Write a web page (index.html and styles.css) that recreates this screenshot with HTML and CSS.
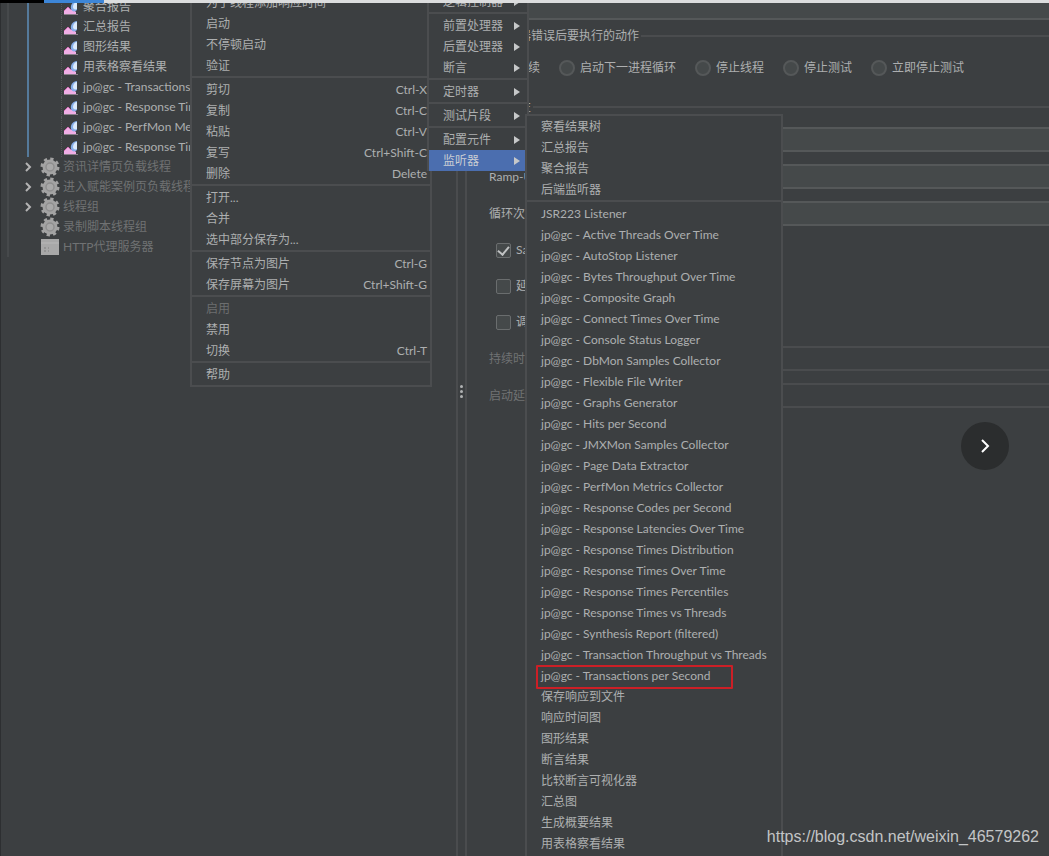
FILE: index.html
```
<!DOCTYPE html>
<html lang="zh-CN">
<head>
  <meta charset="UTF-8">
  <meta name="viewport" content="width=device-width, initial-scale=1.0">
  <title>JMeter</title>
  <link rel="stylesheet" href="styles.css">
</head>
<body>
<svg class="defs" aria-hidden="true">
  <symbol id="chart" viewBox="0 0 14 14">
    <path d="M0 13V10L4 6L7 9L9 8L12 11V13Z" fill="#f0aee6"/>
    <path d="M0 10L4 6L7 9" fill="none" stroke="#cf6fb4"/>
    <path d="M7 8C6 4 9 0 13 0V9C11 11 8 11 7 8Z" fill="#86aeea"/>
    <path d="M9 6C9 3 11 1 13 1V8C11 9 9 8 9 6Z" fill="#dcebfb"/>
    <path d="M0 13.500H14" stroke="#8c7f8c"/>
  </symbol>
  <symbol id="gear" viewBox="0 0 20 20">
    <circle cx="10" cy="10" r="7.5" fill="#a3a3a3"/>
    <circle cx="10" cy="10" r="8" fill="none" stroke="#a3a3a3" stroke-width="3" stroke-dasharray="3.2 3.08"/>
    <circle cx="10" cy="10" r="4" fill="#a9a9a9" stroke="#8f8f8f" stroke-width="1.5"/>
  </symbol>
  <symbol id="server" viewBox="0 0 20 18">
    <path d="M1 1H19V17H1Z" fill="#a8a8a8"/>
    <path d="M1 5H19" stroke="#b8b8b8"/>
    <path d="M4 10H6M8 10H9M4 13H6M8 13H9" stroke="#8c8c8c" stroke-width="1.5"/>
  </symbol>
  <symbol id="chevron" viewBox="0 0 8 10">
    <path d="M2 1L6 5L2 9" fill="none" stroke="#b4b4b4" stroke-width="2"/>
  </symbol>
</svg>

<div class="topbar"><span class="played"></span><span class="active"></span><span class="rest"></span></div>

<div class="app">
  <nav class="tree">
    <ul class="results">
      <li><svg><use href="#chart"/></svg>聚合报告</li>
      <li><svg><use href="#chart"/></svg>汇总报告</li>
      <li><svg><use href="#chart"/></svg>图形结果</li>
      <li><svg><use href="#chart"/></svg>用表格察看结果</li>
      <li><svg><use href="#chart"/></svg>jp@gc - Transactions per Second</li>
      <li><svg><use href="#chart"/></svg>jp@gc - Response Times Over Time</li>
      <li><svg><use href="#chart"/></svg>jp@gc - PerfMon Metrics Collector</li>
      <li><svg><use href="#chart"/></svg>jp@gc - Response Times Over Time</li>
    </ul>
    <ul class="groups">
      <li><button class="toggle" aria-label="展开"><svg><use href="#chevron"/></svg></button><svg class="icon"><use href="#gear"/></svg>资讯详情页负载线程</li>
      <li><button class="toggle" aria-label="展开"><svg><use href="#chevron"/></svg></button><svg class="icon"><use href="#gear"/></svg>进入赋能案例页负载线程</li>
      <li><button class="toggle" aria-label="展开"><svg><use href="#chevron"/></svg></button><svg class="icon"><use href="#gear"/></svg>线程组</li>
      <li><span class="toggle"></span><svg class="icon"><use href="#gear"/></svg>录制脚本线程组</li>
      <li><span class="toggle"></span><svg class="icon"><use href="#server"/></svg>HTTP代理服务器</li>
    </ul>
  </nav>

  <div class="splitter"><i></i><i></i><i></i></div>

  <main class="panel">
    <input class="comment" type="text" aria-label="注释">
    <fieldset class="actions">
      <legend>在取样器错误后要执行的动作</legend>
      <label><input type="radio" name="action">继续</label>
      <label><input type="radio" name="action">启动下一进程循环</label>
      <label><input type="radio" name="action">停止线程</label>
      <label><input type="radio" name="action">停止测试</label>
      <label><input type="radio" name="action">立即停止测试</label>
    </fieldset>
    <fieldset class="props">
      <legend>线程属性</legend>
      <div class="field"><label for="threads">线程数：</label><input id="threads" type="text"></div>
      <div class="field"><label for="ramp">Ramp-Up：</label><input id="ramp" type="text"></div>
      <div class="field"><label for="loops">循环次数</label><input id="loops" type="text"></div>
      <label class="check"><input type="checkbox" checked>Same user</label>
      <label class="check"><input type="checkbox">延迟创建</label>
      <label class="check"><input type="checkbox">调度器</label>
      <div class="field"><label for="duration">持续时间</label><input id="duration" type="text" disabled></div>
      <div class="field"><label for="delay">启动延迟</label><input id="delay" type="text" disabled></div>
    </fieldset>
  </main>
</div>

<div class="menu menu-edit">
  <button>为了线程添加响应时间</button>
  <button>启动</button>
  <button>不停顿启动</button>
  <button>验证</button>
  <hr>
  <button>剪切<kbd>Ctrl-X</kbd></button>
  <button>复制<kbd>Ctrl-C</kbd></button>
  <button>粘贴<kbd>Ctrl-V</kbd></button>
  <button>复写<kbd>Ctrl+Shift-C</kbd></button>
  <button>删除<kbd>Delete</kbd></button>
  <hr>
  <button>打开...</button>
  <button>合并</button>
  <button>选中部分保存为...</button>
  <hr>
  <button>保存节点为图片<kbd>Ctrl-G</kbd></button>
  <button>保存屏幕为图片<kbd>Ctrl+Shift-G</kbd></button>
  <hr>
  <button disabled>启用</button>
  <button>禁用</button>
  <button>切换<kbd>Ctrl-T</kbd></button>
  <hr>
  <button>帮助</button>
</div>

<div class="menu menu-add">
  <button class="sub">逻辑控制器</button>
  <hr>
  <button class="sub">前置处理器</button>
  <button class="sub">后置处理器</button>
  <button class="sub">断言</button>
  <hr>
  <button class="sub">定时器</button>
  <hr>
  <button class="sub">测试片段</button>
  <hr>
  <button class="sub">配置元件</button>
  <button class="sub selected">监听器</button>
</div>

<div class="menu menu-listener">
  <button>察看结果树</button>
  <button>汇总报告</button>
  <button>聚合报告</button>
  <button>后端监听器</button>
  <hr>
  <button>JSR223 Listener</button>
  <button>jp@gc - Active Threads Over Time</button>
  <button>jp@gc - AutoStop Listener</button>
  <button>jp@gc - Bytes Throughput Over Time</button>
  <button>jp@gc - Composite Graph</button>
  <button>jp@gc - Connect Times Over Time</button>
  <button>jp@gc - Console Status Logger</button>
  <button>jp@gc - DbMon Samples Collector</button>
  <button>jp@gc - Flexible File Writer</button>
  <button>jp@gc - Graphs Generator</button>
  <button>jp@gc - Hits per Second</button>
  <button>jp@gc - JMXMon Samples Collector</button>
  <button>jp@gc - Page Data Extractor</button>
  <button>jp@gc - PerfMon Metrics Collector</button>
  <button>jp@gc - Response Codes per Second</button>
  <button>jp@gc - Response Latencies Over Time</button>
  <button>jp@gc - Response Times Distribution</button>
  <button>jp@gc - Response Times Over Time</button>
  <button>jp@gc - Response Times Percentiles</button>
  <button>jp@gc - Response Times vs Threads</button>
  <button>jp@gc - Synthesis Report (filtered)</button>
  <button>jp@gc - Transaction Throughput vs Threads</button>
  <button class="marked">jp@gc - Transactions per Second</button>
  <button>保存响应到文件</button>
  <button>响应时间图</button>
  <button>图形结果</button>
  <button>断言结果</button>
  <button>比较断言可视化器</button>
  <button>汇总图</button>
  <button>生成概要结果</button>
  <button>用表格察看结果</button>
</div>

<button class="next" aria-label="下一张"><svg viewBox="0 0 10 14"><path d="M2 1L8 7L2 13" fill="none" stroke="#fff" stroke-width="2"/></svg></button>
<div class="watermark">https://blog.csdn.net/weixin_46579262</div>
</body>
</html>
```
FILE: styles.css
```
* {
  box-sizing: border-box;
}
body {
  margin: 0;
  height: 100vh;
  overflow: hidden;
  position: relative;
  display: flex;
  flex-direction: column;
  background-color: #3c3f41;
  color: #adafb0;
  font-family: Lato, "Noto Sans CJK SC", sans-serif;
  font-size: 12px;
  line-height: 20px;
}
button,
input {
  font: inherit;
  color: inherit;
}
button {
  background: none;
  border: none;
  padding: 0;
}
ul {
  list-style: none;
  margin: 0;
  padding: 0;
}
.defs {
  position: absolute;
  width: 0;
  height: 0;
}

/* progress strip */
.topbar {
  display: flex;
  flex: none;
  height: 3px;
  position: relative;
  z-index: 10;
}
.played {
  width: 44px;
  background-color: #000;
}
.active {
  width: 60px;
  background-color: #3d86d8;
}
.rest {
  flex: 1;
  background-color: #dcddde;
}

.app {
  display: flex;
  flex: 1;
  min-height: 0;
}

/* tree */
.tree {
  width: 456px;
  flex: none;
  overflow: hidden;
  border-left: 1px solid #2d2f31;
  padding-left: 6px;
}
.tree li {
  display: flex;
  align-items: center;
  height: 20px;
  white-space: nowrap;
}
.results {
  margin-top: -6px;
  margin-left: 20px;
  padding-left: 32px;
  border-left: 2px solid #557a9b;
}
.results li {
  border-left: 1px dotted #55585a;
  padding-left: 2px;
  gap: 5px;
}
.results svg {
  width: 14px;
  height: 14px;
  margin-top: 2px;
}
.tree ul {
  position: relative;
}
.results::before,
.groups::before {
  content: "";
  position: absolute;
  top: 0;
  bottom: 0;
  left: 0;
  width: 2px;
  background-color: #46494b;
}
.results::before {
  left: -22px;
}
.groups {
  color: #707273;
  padding-left: 17px;
}
.toggle {
  width: 8px;
  height: 10px;
  margin-right: 8px;
  display: flex;
}
.toggle svg {
  width: 8px;
  height: 10px;
}
.icon {
  width: 20px;
  height: 20px;
  margin-right: 3px;
}

.splitter {
  flex: none;
  width: 11px;
  border-left: 2px solid #4a4c4e;
  border-right: 2px solid #4a4c4e;
  display: flex;
  flex-direction: column;
  align-items: center;
  gap: 2px;
  padding-top: 382px;
}
.splitter i {
  width: 3px;
  height: 3px;
  border-radius: 50%;
  background-color: #b0b2b3;
}

/* thread group form */
.panel {
  flex: 1;
  min-width: 0;
  padding-left: 6px;
}
.panel input {
  background-color: #45494a;
  border: 2px solid #555859;
  margin: 0;
}
.panel .comment {
  display: block;
  width: 100%;
  height: 17px;
  border-width: 0 0 2px;
}
fieldset {
  border: 0 solid #4a4c4e;
  border-top-width: 2px;
  margin: 0;
  padding: 0;
  min-width: 0;
}
legend {
  padding: 0 2px;
}
.actions {
  margin-top: 6px;
  padding: 12px 0 0 22px;
  height: 71px;
  display: flex;
  align-items: flex-start;
  gap: 19px;
  white-space: nowrap;
}
.actions legend {
  margin-left: -14px;
}
.actions label {
  display: flex;
  align-items: center;
  gap: 5px;
}
.actions input {
  appearance: none;
  width: 16px;
  height: 16px;
  border-radius: 50%;
}
.props {
  padding: 10px 0 0 16px;
}
.props legend {
  margin-left: -8px;
}
.field {
  display: flex;
  align-items: center;
  height: 25px;
  margin-bottom: 12px;
}
.field label {
  width: 120px;
  flex: none;
}
.field input {
  flex: 1;
  min-width: 0;
  height: 25px;
  border-right: none;
}
.field input:disabled {
  background-color: #3c3f41;
  border-color: #4a4c4e;
}
.field:has(input:disabled) {
  color: #707273;
}
.check {
  display: flex;
  align-items: center;
  gap: 5px;
  height: 20px;
  margin: 0 0 16px 7px;
}
.field + .check {
  margin-top: 14px;
}
.check:has(+ .field) {
  margin-bottom: 14px;
}
.check input {
  appearance: none;
  width: 15px;
  height: 15px;
  border-width: 1px;
  border-color: #6a6d6e;
  border-radius: 2px;
  display: flex;
  justify-content: center;
}
.check input:checked::before {
  content: "";
  width: 5px;
  height: 9px;
  border: solid #c0c2c3;
  border-width: 0 2px 2px 0;
  transform: rotate(40deg);
}

/* popup menus */
.menu {
  position: absolute;
  display: flex;
  flex-direction: column;
  background-color: #3c3f41;
  border: 2px solid #4b4d4f;
}
.menu button {
  display: flex;
  align-items: center;
  justify-content: space-between;
  flex: none;
  height: 21px;
  padding-left: 14px;
  white-space: nowrap;
}
.menu button:disabled {
  color: #6c6e6f;
}
.menu hr {
  flex: none;
  width: 100%;
  height: 2px;
  margin: 0 0 1px;
  border: none;
  background-color: #4b4d4f;
}
.menu kbd {
  font: inherit;
  padding-right: 3px;
}
.menu-edit {
  top: -8px;
  left: 190px;
  width: 242px;
  border-top: none;
}
.menu-add {
  top: -9px;
  left: 427px;
  width: 102px;
  border-top: none;
  border-bottom: none;
}
.menu-listener {
  top: 114px;
  bottom: 0;
  left: 525px;
  width: 258px;
  border-bottom: none;
}
.sub::after {
  content: "";
  margin-right: 7px;
  border-left: 6px solid #c6c8c9;
  border-top: 4px solid transparent;
  border-bottom: 4px solid transparent;
}
.menu .selected {
  background-color: #4b6eaf;
  color: #c9cdd3;
}
.marked {
  position: relative;
}
.marked::after {
  content: "";
  position: absolute;
  top: 0;
  bottom: -3px;
  left: 9px;
  right: 48px;
  border: 2px solid #cc1f26;
  border-radius: 1px;
}

.next {
  position: absolute;
  top: 422px;
  right: 40px;
  width: 48px;
  height: 48px;
  border-radius: 50%;
  background-color: #2b2d2e;
  display: flex;
  align-items: center;
  justify-content: center;
}
.next svg {
  width: 10px;
  height: 14px;
}
.watermark {
  position: absolute;
  right: 10px;
  bottom: 9px;
  color: #c3c5c6;
  font-family: "Liberation Sans", sans-serif;
  font-size: 16px;
}
```
